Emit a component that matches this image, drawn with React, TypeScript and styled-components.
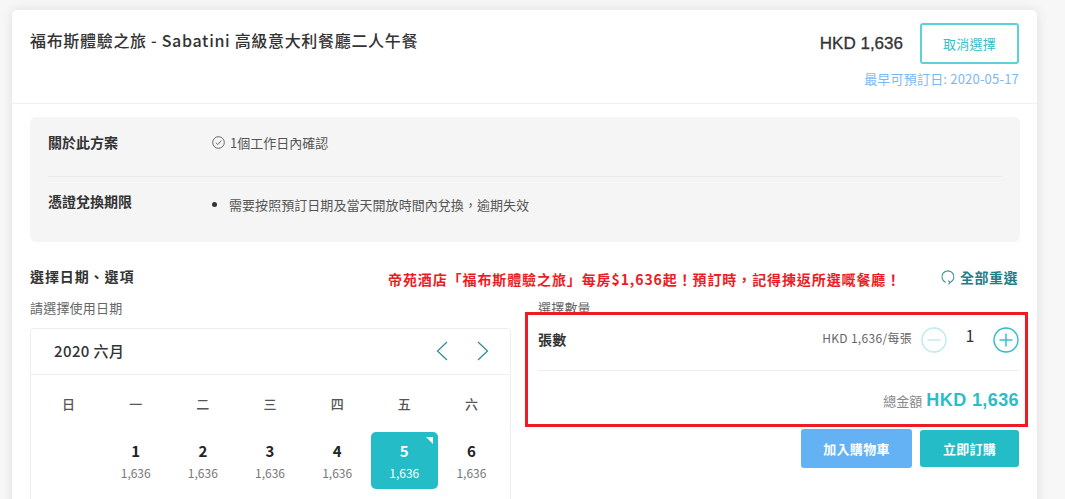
import React from "react";
import styled, { createGlobalStyle } from "styled-components";

const Global = createGlobalStyle`
  html, body { margin: 0; padding: 0; height: 499px; overflow: hidden; background: #f7f7f7; }
  body { font-family: "Noto Sans CJK TC", "Noto Sans", sans-serif; color: #333; }
  * { box-sizing: border-box; }
`;
const Page = styled.div`
  position: relative;
  height: 499px;
  overflow: hidden;
  padding: 10px 28px 0 12px;
`;
const Card = styled.div`
  background: #fff;
  border-radius: 5px;
  box-shadow: 0 0 12px rgba(0, 0, 0, 0.1);
  height: 600px;
`;
const Header = styled.header`
  height: 94px;
  padding: 13px 18px 0;
  display: flex;
  justify-content: space-between;
  border-bottom: 1px solid #f0f0f0;
`;
const Title = styled.h1`
  margin: 5px 0 0;
  font-size: 16px;
  line-height: 24px;
  font-weight: 500;
  letter-spacing: 0.68px;
  color: #333;
`;
const HeaderRight = styled.div`
  display: flex;
  flex-direction: column;
  align-items: flex-end;
`;
const PriceRow = styled.div`
  display: flex;
  align-items: center;
  gap: 17px;
`;
const Price = styled.span`
  font-family: "Liberation Sans", Arial, sans-serif;
  font-size: 17px;
  font-weight: 400;
  -webkit-text-stroke: 0.3px #333;
  color: #333;
`;
const CancelButton = styled.button`
  width: 99px;
  height: 41px;
  border: 2px solid #5dd0d8;
  border-radius: 3px;
  background: #fff;
  color: #33bfc9;
  font: 400 13px "Noto Sans CJK TC", sans-serif;
  letter-spacing: 0.3px;
`;
const Earliest = styled.div`
  margin-top: 6px;
  font-size: 13px;
  line-height: 18px;
  color: #7ab8f5;
  letter-spacing: 0.2px;
`;
const Body = styled.div`
  padding: 13px 17px 0 18px;
`;
const InfoBox = styled.section`
  background: #f5f5f5;
  border-radius: 6px;
  height: 125px;
  padding: 0 18px;
`;
const InfoRow = styled.div<{ $h: number; $pad: number }>`
  display: grid;
  grid-template-columns: 164px 1fr;
  height: ${(p) => p.$h}px;
  padding-top: ${(p) => p.$pad}px;
  & + & { border-top: 1px solid #eaeaea; }
`;
const InfoLabel = styled.div`
  font-size: 14px;
  line-height: 22px;
  font-weight: 700;
  color: #333;
`;
const InfoValue = styled.div`
  display: flex;
  align-items: center;
  height: 22px;
  gap: 5px;
  font-size: 13px;
  color: #555;
`;
const BulletList = styled.ul`
  margin: 5px 0 0;
  padding: 0 0 0 17px;
  font-size: 13px;
  line-height: 20px;
  color: #555;
  letter-spacing: 0.05px;
  li::marker { color: #333; }
`;
const SectionHead = styled.div`
  display: flex;
  justify-content: space-between;
  align-items: center;
  margin-top: 23px;
  height: 24px;
`;
const SectionTitle = styled.h2`
  margin: -2px 0 0;
  font-size: 14px;
  line-height: 24px;
  font-weight: 700;
  color: #333;
  letter-spacing: 0.9px;
`;
const ResetLink = styled.div`
  display: flex;
  align-items: center;
  gap: 4px;
  padding-right: 2px;
  font-size: 14px;
  font-weight: 700;
  color: #1f7f87;
  letter-spacing: 0.5px;
`;
const Promo = styled.div`
  position: absolute;
  left: 388px;
  top: 269px;
  font-size: 14px;
  line-height: 20px;
  font-weight: 700;
  color: #ed1c24;
  letter-spacing: 0.9px;
  white-space: nowrap;
`;
const Columns = styled.div`
  display: grid;
  grid-template-columns: 481px 481px;
  column-gap: 27px;
  margin-top: 10px;
`;
const SubLabel = styled.div`
  font-size: 13px;
  line-height: 18px;
  color: #666;
  letter-spacing: 0.2px;
`;
const Calendar = styled.div`
  margin-top: 11px;
  min-height: 230px;
  border: 1px solid #eee;
  border-radius: 4px;
`;
const CalHead = styled.div`
  display: flex;
  align-items: center;
  justify-content: space-between;
  height: 46px;
  padding: 0 21px 2px 23px;
  border-bottom: 1px solid #eee;
`;
const CalTitle = styled.div`
  font-size: 15px;
  font-weight: 500;
  letter-spacing: 0.4px;
  color: #333;
`;
const CalNav = styled.div`
  display: flex;
  gap: 29px;
`;
const Grid = styled.div`
  display: grid;
  grid-template-columns: repeat(7, 1fr);
  padding: 0 5px 0 4px;
`;
const Weekday = styled.div`
  height: 57px;
  display: flex;
  align-items: center;
  justify-content: center;
  font-size: 13px;
  font-weight: 500;
  color: #555;
`;
const Day = styled.div<{ $active?: boolean }>`
  position: relative;
  height: 57px;
  border-radius: 5px;
  display: flex;
  flex-direction: column;
  align-items: center;
  padding-top: 8px;
  background: ${(p) => (p.$active ? "#23bcc7" : "transparent")};
  color: ${(p) => (p.$active ? "#fff" : "#222")};
`;
const DayNum = styled.span`
  font-size: 15px;
  line-height: 22px;
  font-weight: 700;
`;
const DayPrice = styled.span<{ $active?: boolean }>`
  margin-top: 1px;
  font-size: 12px;
  line-height: 20px;
  color: ${(p) => (p.$active ? "#fff" : "#777")};
`;
const Corner = styled.span`
  position: absolute;
  top: 5px;
  right: 5px;
  width: 0;
  height: 0;
  border-top: 7px solid #fff;
  border-left: 7px solid transparent;
`;
const QtyRow = styled.div`
  margin-top: 2px;
  height: 52px;
  display: flex;
  align-items: center;
  border-bottom: 1px solid #eee;
  padding-bottom: 9px;
`;
const QtyLabel = styled.div`
  flex: 1;
  margin-top: -2px;
  font-size: 14px;
  font-weight: 700;
  letter-spacing: 0.2px;
  color: #333;
`;
const UnitPrice = styled.div`
  font-size: 12px;
  color: #666;
  letter-spacing: 0.3px;
  margin: -5px 9px 0 0;
`;
const QtyValue = styled.div`
  width: 46px;
  text-align: center;
  font-size: 16px;
  line-height: 20px;
  margin-top: -10px;
  color: #333;
`;
const TotalRow = styled.div`
  display: flex;
  justify-content: flex-end;
  align-items: center;
  gap: 4px;
  margin-top: 16px;
  height: 26px;
`;
const TotalLabel = styled.span`
  font-size: 13px;
  color: #888;
  margin-top: 1px;
`;
const TotalValue = styled.span`
  font-family: "Liberation Sans", Arial, sans-serif;
  font-size: 18px;
  font-weight: 700;
  color: #2bbdc7;
  letter-spacing: 0.4px;
`;
const Actions = styled.div`
  display: flex;
  justify-content: flex-end;
  align-items: center;
  gap: 8px;
  margin-top: 16px;
`;
const ActionButton = styled.button<{ $bg: string; $w: number; $h: number }>`
  width: ${(p) => p.$w}px;
  height: ${(p) => p.$h}px;
  border: 0;
  border-radius: 3px;
  background: ${(p) => p.$bg};
  color: #fff;
  font: 700 13px "Noto Sans CJK TC", sans-serif;
  letter-spacing: 0.3px;
`;
const Annotation = styled.div`
  position: absolute;
  left: 525px;
  top: 312px;
  width: 503px;
  height: 115px;
  border: 3px solid #ed1c24;
  pointer-events: none;
`;

const CheckCircle = () => (
  <svg width="13" height="13" viewBox="0 0 13 13" fill="none" stroke="#666" strokeWidth="1">
    <circle cx="6.5" cy="6.5" r="5.8" />
    <path d="M3.8 6.7 L5.8 8.6 L9.3 4.6" />
  </svg>
);
const Reset = () => (
  <svg width="16" height="16" viewBox="0 0 16 16" fill="none" stroke="#3d8f97" strokeWidth="1.1">
    <path d="M5.6 13.4 A6 6 0 1 1 10.2 13.4" />
    <path d="M8 11.6 L10.3 13.4 L8.4 15.4" />
  </svg>
);
const Chevron = ({ d }: { d: string }) => (
  <svg width="12" height="20" viewBox="0 0 12 20" fill="none" stroke="#2b8a94" strokeWidth="1.2">
    <path d={d} />
  </svg>
);
const RoundIcon = ({ plus, color }: { plus?: boolean; color: string }) => (
  <svg width="26" height="26" viewBox="0 0 26 26" fill="none" stroke={color} strokeWidth="1.4">
    <circle cx="13" cy="13" r="12" />
    <path d="M6.5 13 H19.5" />
    {plus && <path d="M13 6.5 V19.5" />}
  </svg>
);

const weekdays = ["日", "一", "二", "三", "四", "五", "六"];
const days = [null, 1, 2, 3, 4, 5, 6];

export default function App() {
  return (
    <Page>
      <Global />
      <Card>
        <Header>
          <Title>福布斯體驗之旅 - Sabatini 高級意大利餐廳二人午餐</Title>
          <HeaderRight>
            <PriceRow>
              <Price>HKD 1,636</Price>
              <CancelButton>取消選擇</CancelButton>
            </PriceRow>
            <Earliest>最早可預訂日: 2020-05-17</Earliest>
          </HeaderRight>
        </Header>
        <Body>
          <InfoBox>
            <InfoRow $h={59} $pad={14}>
              <InfoLabel>關於此方案</InfoLabel>
              <InfoValue>
                <CheckCircle />
                1個工作日內確認
              </InfoValue>
            </InfoRow>
            <InfoRow $h={66} $pad={13}>
              <InfoLabel>憑證兌換期限</InfoLabel>
              <BulletList>
                <li>需要按照預訂日期及當天開放時間內兌換，逾期失效</li>
              </BulletList>
            </InfoRow>
          </InfoBox>
          <SectionHead>
            <SectionTitle>選擇日期、選項</SectionTitle>
            <ResetLink>
              <Reset />
              全部重選
            </ResetLink>
          </SectionHead>
          <Columns>
            <div>
              <SubLabel>請選擇使用日期</SubLabel>
              <Calendar>
                <CalHead>
                  <CalTitle>2020 六月</CalTitle>
                  <CalNav>
                    <Chevron d="M11 1 L1.5 10 L11 19" />
                    <Chevron d="M1 1 L10.5 10 L1 19" />
                  </CalNav>
                </CalHead>
                <Grid>
                  {weekdays.map((w) => (
                    <Weekday key={w}>{w}</Weekday>
                  ))}
                  {days.map((d, i) =>
                    d === null ? (
                      <div key={i} />
                    ) : (
                      <Day key={d} $active={d === 5}>
                        {d === 5 && <Corner />}
                        <DayNum>{d}</DayNum>
                        <DayPrice $active={d === 5}>1,636</DayPrice>
                      </Day>
                    )
                  )}
                </Grid>
              </Calendar>
            </div>
            <div>
              <SubLabel>選擇數量</SubLabel>
              <QtyRow>
                <QtyLabel>張數</QtyLabel>
                <UnitPrice>HKD 1,636/每張</UnitPrice>
                <RoundIcon color="#bfe9ec" />
                <QtyValue>1</QtyValue>
                <RoundIcon plus color="#2bbdc7" />
              </QtyRow>
              <TotalRow>
                <TotalLabel>總金額</TotalLabel>
                <TotalValue>HKD 1,636</TotalValue>
              </TotalRow>
              <Actions>
                <ActionButton $bg="#64b1f4" $w={111} $h={39}>加入購物車</ActionButton>
                <ActionButton $bg="#23bcc7" $w={99} $h={37}>立即訂購</ActionButton>
              </Actions>
            </div>
          </Columns>
        </Body>
      </Card>
      <Promo>帝苑酒店「福布斯體驗之旅」每房$1,636起！預訂時，記得揀返所選嘅餐廳！</Promo>
      <Annotation />
    </Page>
  );
}
